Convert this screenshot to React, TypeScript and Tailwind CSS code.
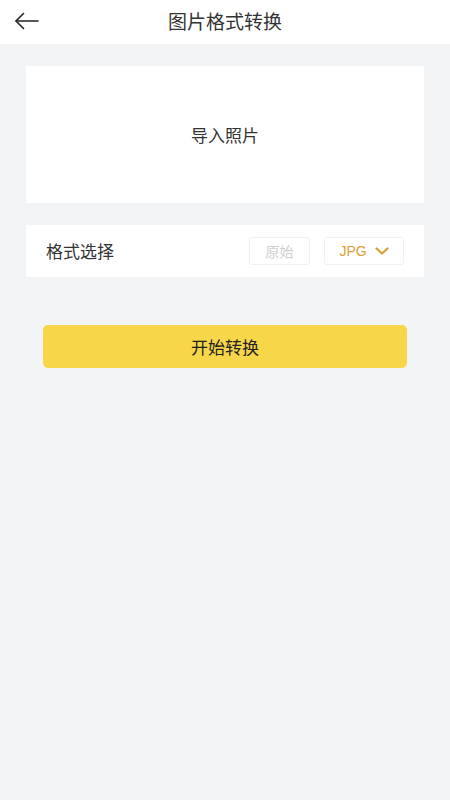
import React from "react";

export default function App() {
  const font = { fontFamily: '"Noto Sans CJK SC", "Noto Sans", sans-serif' };
  return (
    <div className="w-[450px] h-[800px] bg-[#f3f4f6] flex flex-col" style={font}>
      <div className="h-[44px] bg-white flex items-center relative shrink-0">
        <div className="absolute left-[14px] top-[12px]">
          <svg width="26" height="18" viewBox="0 0 26 18" fill="none" stroke="#222" strokeWidth="1.6" strokeLinecap="round" strokeLinejoin="round">
            <path d="M24 9H2" />
            <path d="M9.5 1.5L2 9L9.5 16.5" />
          </svg>
        </div>
        <div className="flex-1 text-center text-[19px] text-[#333] leading-none -mt-[3px]">图片格式转换</div>
      </div>
      <div className="mx-[26px] mt-[22px] h-[137px] bg-white flex items-center justify-center text-[17px] text-[#333]">
        导入照片
      </div>
      <div className="mx-[26px] mt-[22px] h-[52px] bg-white flex items-center pl-[20px] pr-[20px]">
        <div className="flex-1 text-[17px] text-[#333]">格式选择</div>
        <div className="w-[61px] h-[28px] border border-[#f0f0f0] rounded-[3px] flex items-center justify-center text-[14px] text-[#cfcfcf]">
          原始
        </div>
        <div className="ml-[14px] w-[80px] h-[28px] border border-[#f0f0f0] rounded-[3px] flex items-center justify-center gap-[8px] text-[14px] text-[#d9a035]">
          <span style={{ fontFamily: '"Liberation Sans", sans-serif' }}>JPG</span>
          <svg width="14" height="9" viewBox="0 0 14 9" fill="none" stroke="#d9a035" strokeWidth="2.2" strokeLinecap="round" strokeLinejoin="round">
            <path d="M1.5 1.5L7 6.5L12.5 1.5" />
          </svg>
        </div>
      </div>
      <div className="mx-[43px] mt-[48px] h-[43px] bg-[#f7d64a] rounded-[5px] flex items-center justify-center text-[17px] text-[#222]">
        开始转换
      </div>
    </div>
  );
}
